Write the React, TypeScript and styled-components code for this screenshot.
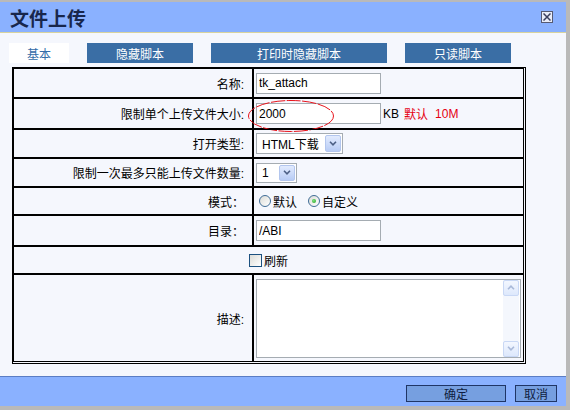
import React from 'react';
import styled, { createGlobalStyle } from 'styled-components';

const GlobalStyle = createGlobalStyle`
  *, *::before, *::after { box-sizing: border-box; }
  html, body { margin: 0; padding: 0; background: #b9b9b9; }
  body {
    font-family: "Liberation Sans", "Noto Sans CJK SC", sans-serif;
    font-size: 12px;
    color: #000;
  }
`;

const Dialog = styled.div`
  margin-top: 2px;
  width: 566px;
  height: 404px;
  display: flex;
  flex-direction: column;
  background: #f5f7fd;
`;

const TitleBar = styled.div`
  flex: none;
  height: 31px;
  display: flex;
  align-items: center;
  justify-content: space-between;
  padding: 0 13px 0 10px;
  background: #8ab1ff;
  border-bottom: 1px solid #d8d39e;
`;

const Title = styled.h1`
  margin: 0;
  font-family: "Noto Sans CJK SC", sans-serif;
  font-size: 19px;
  font-weight: 700;
  line-height: 1;
  color: #18264c;
`;

const CloseButton = styled.button`
  width: 12px;
  height: 12px;
  padding: 0;
  border: 1px solid #565a73;
  background: #e9ecf8;
  display: grid;
  place-items: center;
`;

const Body = styled.div`
  flex: 1;
  padding-top: 10px;
`;

const Tabs = styled.div`
  display: flex;
  gap: 18px;
  padding-left: 9px;
`;

const Tab = styled.div<{ $w: number; $active?: boolean }>`
  width: ${(p) => p.$w}px;
  height: 20px;
  display: grid;
  place-items: center;
  font-size: 12px;
  background: ${(p) => (p.$active ? '#ffffff' : '#3a6ea5')};
  color: ${(p) => (p.$active ? '#336ca8' : '#ffffff')};
`;

const FormTable = styled.div`
  margin: 4px 0 0 12px;
  width: 514px;
  border: 1px solid #000;
  padding: 0 1px 1px 0;
`;

const Row = styled.div<{ $h: number }>`
  display: grid;
  grid-template-columns: 240px 271px;
  height: ${(p) => p.$h}px;
`;

const LabelCell = styled.div`
  border: 1px solid #000;
  display: flex;
  align-items: center;
  justify-content: flex-end;
  padding-right: 8px;
  white-space: nowrap;
`;

const ValueCell = styled.div`
  position: relative;
  border: 1px solid #000;
  display: flex;
  align-items: center;
  padding: 0 2px;
  white-space: nowrap;
`;

const WideCell = styled.div`
  grid-column: 1 / -1;
  border: 1px solid #000;
  display: flex;
  align-items: center;
  justify-content: center;
  gap: 2px;
`;

const TextInput = styled.input`
  width: 125px;
  height: 21px;
  margin: 0;
  padding: 0 2px;
  border: 1px solid #a5acb2;
  background: #fff;
  font-family: "Liberation Sans", "Noto Sans CJK SC", sans-serif;
  font-size: 12px;
  color: #000;
  outline: none;
`;

const Unit = styled.span`
  margin-left: 2px;
  color: #000;
`;

const Note = styled.span<{ $gap: number }>`
  margin-left: ${(p) => p.$gap}px;
  color: #e60012;
`;

/* red ring drawn over the size field */
const Mark = styled.svg`
  position: absolute;
  left: -6px;
  top: 1px;
  overflow: visible;
  pointer-events: none;
`;

const Combo = styled.div<{ $w: number; $h: number }>`
  width: ${(p) => p.$w}px;
  height: ${(p) => p.$h}px;
  border: 1px solid #a5acb2;
  background: #fff;
  padding: 1px;
  display: flex;
`;

const ComboValue = styled.span`
  flex: 1;
  display: flex;
  align-items: center;
  padding-left: 4px;
`;

const ComboArrow = styled.span`
  width: 16px;
  border: 1px solid #b3c6ee;
  border-radius: 2px;
  background: linear-gradient(#e2ebfe, #b8ccf5);
  display: grid;
  place-items: center;
`;

const Choice = styled.label<{ $gap?: number }>`
  display: inline-flex;
  align-items: center;
  gap: 2px;
  margin-left: ${(p) => p.$gap ?? 0}px;
`;

const Radio = styled.span<{ $on?: boolean }>`
  position: relative;
  width: 12px;
  height: 12px;
  border-radius: 50%;
  border: 1px solid #3f6c96;
  background: linear-gradient(135deg, #dcdcd7, #ffffff);
  &::after {
    content: '';
    position: absolute;
    inset: 3px;
    border-radius: 50%;
    background: ${(p) => (p.$on ? 'radial-gradient(circle at 40% 40%, #7be07b, #21a121)' : 'transparent')};
  }
`;

const Check = styled.span`
  width: 13px;
  height: 13px;
  border: 1px solid #1c5180;
  background: linear-gradient(135deg, #dcdcd7, #ffffff);
`;

const TextBox = styled.div`
  width: 265px;
  height: 79px;
  border: 1px solid #a5acb2;
  background: #fff;
  display: flex;
  padding: 0 1px 0 0;
`;

const TextArea = styled.textarea`
  flex: 1;
  border: none;
  resize: none;
  outline: none;
  background: transparent;
  font-family: "Liberation Sans", "Noto Sans CJK SC", sans-serif;
  font-size: 12px;
  overflow: hidden;
`;

const ScrollTrack = styled.div`
  width: 16px;
  display: flex;
  flex-direction: column;
  justify-content: space-between;
  background: #f4f7fd;
`;

const ScrollButton = styled.span`
  height: 16px;
  border: 1px solid #c9d8f5;
  border-radius: 2px;
  background: linear-gradient(#f3f7ff, #dde8fc);
  display: grid;
  place-items: center;
`;

const Footer = styled.div`
  flex: none;
  height: 30px;
  border-top: 1px solid #5b7dc4;
  background: #8ab1ff;
  display: flex;
  justify-content: flex-end;
  align-items: flex-start;
  gap: 9px;
  padding: 8px 9px 0 0;
`;

const FooterButton = styled.button<{ $w: number }>`
  width: ${(p) => p.$w}px;
  height: 17px;
  padding: 0;
  border: 1px solid #1f3566;
  background: #769fe0;
  color: #0f1d40;
  font-family: "Noto Sans CJK SC", sans-serif;
  font-size: 12px;
  line-height: 15px;
`;

const Chevron = ({ up, color }: { up?: boolean; color: string }) => (
  <svg width="8" height="5" viewBox="0 0 8 5">
    <path
      d={up ? 'M1 4.2 L4 1.2 L7 4.2' : 'M1 0.8 L4 3.8 L7 0.8'}
      fill="none"
      stroke={color}
      strokeWidth="1.6"
    />
  </svg>
);

const Select = ({ w, h, value }: { w: number; h: number; value: string }) => (
  <Combo $w={w} $h={h}>
    <ComboValue>{value}</ComboValue>
    <ComboArrow>
      <Chevron color="#4c5f85" />
    </ComboArrow>
  </Combo>
);

export default function App() {
  return (
    <>
      <GlobalStyle />
      <Dialog>
        <TitleBar>
          <Title>文件上传</Title>
          <CloseButton aria-label="关闭">
            <svg width="8" height="8" viewBox="0 0 8 8">
              <path d="M0.5 0.5 L7.5 7.5 M7.5 0.5 L0.5 7.5" stroke="#3b3f5e" strokeWidth="1.5" />
            </svg>
          </CloseButton>
        </TitleBar>

        <Body>
          <Tabs>
            <Tab $w={60} $active>基本</Tab>
            <Tab $w={106}>隐藏脚本</Tab>
            <Tab $w={176}>打印时隐藏脚本</Tab>
            <Tab $w={106}>只读脚本</Tab>
          </Tabs>

          <FormTable>
            <Row $h={30}>
              <LabelCell>名称:</LabelCell>
              <ValueCell>
                <TextInput readOnly value="tk_attach" />
              </ValueCell>
            </Row>
            <Row $h={31}>
              <LabelCell>限制单个上传文件大小:</LabelCell>
              <ValueCell>
                <TextInput readOnly value="2000" />
                <Unit>KB</Unit>
                <Note $gap={5}>默认</Note>
                <Note $gap={7}>10M</Note>
                <Mark width="86" height="32" viewBox="0 0 86 32">
                  <ellipse cx="43" cy="16" rx="42.5" ry="15.5" fill="none" stroke="#e8141c" strokeWidth="1" strokeDasharray="14 1.5" />
                </Mark>
              </ValueCell>
            </Row>
            <Row $h={29}>
              <LabelCell>打开类型:</LabelCell>
              <ValueCell>
                <Select w={87} h={21} value="HTML下载" />
              </ValueCell>
            </Row>
            <Row $h={29}>
              <LabelCell>限制一次最多只能上传文件数量:</LabelCell>
              <ValueCell>
                <Select w={41} h={20} value="1" />
              </ValueCell>
            </Row>
            <Row $h={28}>
              <LabelCell>模式：</LabelCell>
              <ValueCell>
                <Choice $gap={3}>
                  <Radio />
                  默认
                </Choice>
                <Choice $gap={11}>
                  <Radio $on />
                  自定义
                </Choice>
              </ValueCell>
            </Row>
            <Row $h={31}>
              <LabelCell>目录：</LabelCell>
              <ValueCell>
                <TextInput readOnly value="/ABI" />
              </ValueCell>
            </Row>
            <Row $h={28}>
              <WideCell>
                <Check />
                刷新
              </WideCell>
            </Row>
            <Row $h={88}>
              <LabelCell>描述:</LabelCell>
              <ValueCell>
                <TextBox>
                  <TextArea readOnly value="" />
                  <ScrollTrack>
                    <ScrollButton>
                      <Chevron up color="#a9b9d9" />
                    </ScrollButton>
                    <ScrollButton>
                      <Chevron color="#a9b9d9" />
                    </ScrollButton>
                  </ScrollTrack>
                </TextBox>
              </ValueCell>
            </Row>
          </FormTable>
        </Body>

        <Footer>
          <FooterButton $w={100}>确定</FooterButton>
          <FooterButton $w={42}>取消</FooterButton>
        </Footer>
      </Dialog>
    </>
  );
}
